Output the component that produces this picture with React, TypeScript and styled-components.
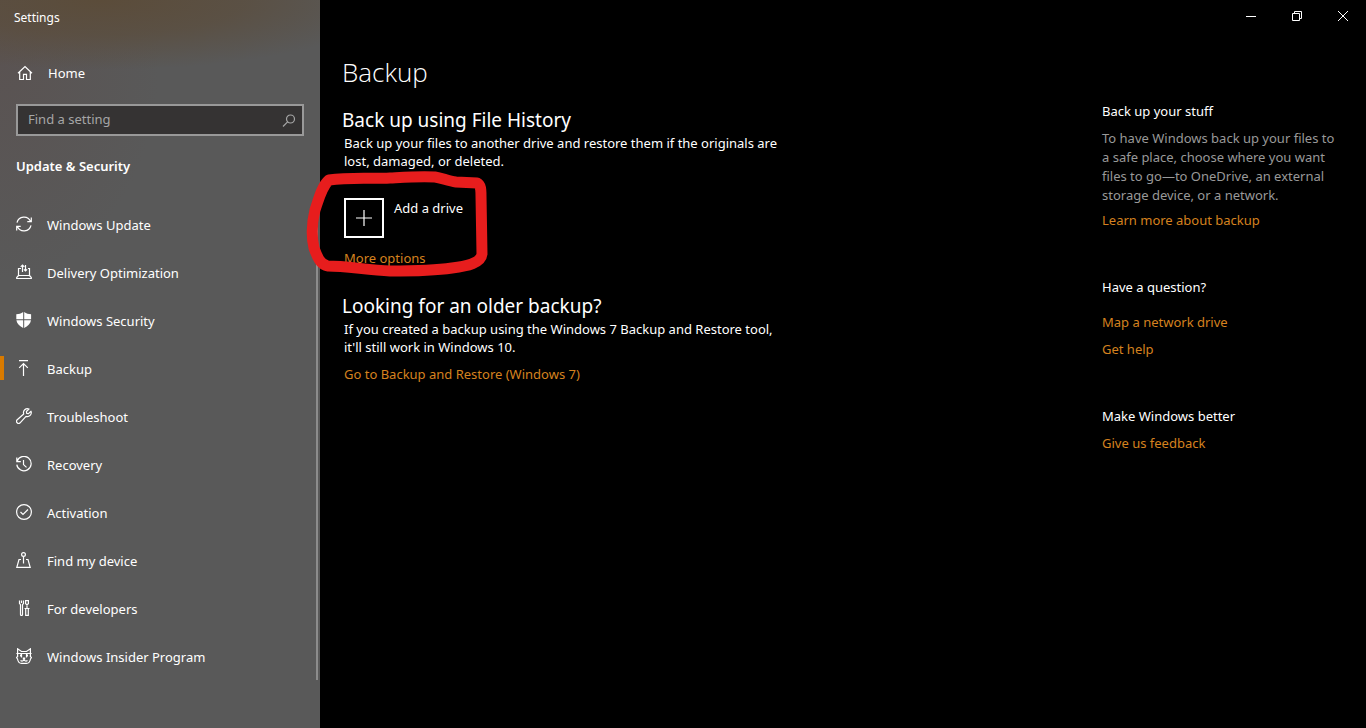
import React from "react";
import styled, { createGlobalStyle } from "styled-components";

const GlobalStyle = createGlobalStyle`
  * { box-sizing: border-box; }
  body {
    margin: 0;
    background: #000;
    color: #fff;
    font-family: "Noto Sans", "Open Sans", sans-serif;
    font-size: 13px;
    line-height: 18px;
  }
  h1, h2, h3, p, ul { margin: 0; padding: 0; font-size: inherit; font-weight: 400; }
  ul { list-style: none; }
  button { font: inherit; color: inherit; background: none; border: 0; padding: 0; }
`;

const Shell = styled.div`
  display: grid;
  grid-template-columns: 320px minmax(0, 1fr);
  min-height: 100vh;
`;

const Sidebar = styled.aside`
  display: flex;
  flex-direction: column;
  background:
    radial-gradient(ellipse 290px 70px at 100px 0, #5b4c3a 0%, #5b4c3aaa 50%, #5b4c3a00 100%),
    radial-gradient(ellipse 160px 220px at 0 60px, #5a5352 0%, #5a535200 100%),
    #595959;
`;

const AppName = styled.div`
  padding: 9px 14px;
  font-size: 12px;
`;

const HomeLink = styled.a`
  display: flex;
  align-items: center;
  gap: 15px;
  height: 40px;
  margin-top: 17px;
  padding-left: 17px;
  color: #fff;
  text-decoration: none;
`;

const SearchBox = styled.label`
  display: flex;
  align-items: center;
  height: 32px;
  margin: 11px 16px 0;
  padding: 0 5px 0 10px;
  border: 2px solid #999;
  background: #353333;
  color: #a6a6a6;
`;

const SearchInput = styled.input`
  flex: 1;
  min-width: 0;
  padding: 0 0 2px;
  border: 0;
  outline: 0;
  background: none;
  color: #fff;
  font: inherit;
  &::placeholder { color: #a6a6a6; opacity: 1; }
`;

const SectionName = styled.h2`
  padding: 21px 16px 0;
  && { font-weight: 600; }
`;

const NavScroll = styled.nav`
  flex: 1;
  display: flex;
  justify-content: space-between;
  margin-top: 26px;
  padding-right: 2px;
`;

const NavList = styled.ul`
  flex: 1;
`;

const ScrollThumb = styled.div`
  width: 2px;
  height: 479px;
  background: #8c8c8c;
`;

const NavLink = styled.a<{ $active?: boolean }>`
  display: flex;
  align-items: center;
  height: 48px;
  color: #fff;
  text-decoration: none;
  &::before {
    content: "";
    width: 4px;
    height: 24px;
    margin: 0 12px 2px 0;
    background: ${(p) => (p.$active ? "#d87a00" : "transparent")};
  }
  svg { margin: 0 15px 2px 0; }
`;

const Icon = styled.svg<{ $thin?: boolean }>`
  flex: none;
  width: 16px;
  height: 16px;
  fill: none;
  stroke: currentColor;
  stroke-width: ${(p) => (p.$thin ? 1 : 1.2)};
`;

const Main = styled.main`
  display: flex;
  flex-direction: column;
  min-width: 0;
`;

const WindowBar = styled.div`
  display: flex;
  justify-content: flex-end;
`;

const WindowButton = styled.button`
  display: grid;
  place-items: center;
  width: 46px;
  height: 32px;
`;

const Content = styled.div`
  display: flex;
  justify-content: space-between;
  gap: 32px;
  padding: 22px 24px 24px 22px;
`;

const Settings = styled.div`
  max-width: 448px;
`;

const PageTitle = styled.h1`
  font-family: "Open Sans", "Noto Sans", sans-serif;
  && { font-size: 26px; font-weight: 350; }
  line-height: 36px;
`;

const GroupTitle = styled.h2`
  && { font-size: 19px; }
  line-height: 24px;
`;

const GroupBody = styled.div`
  padding: 2px 2px 0;
`;

const Group = styled.section<{ $gap: number }>`
  margin-top: ${(p) => p.$gap}px;
`;

const Link = styled.a`
  color: #d5821f;
  text-decoration: none;
`;

const DriveArea = styled.div`
  position: relative;
  display: flex;
  flex-direction: column;
  align-items: flex-start;
  gap: 11px;
  margin-top: 28px;
`;

const AddDrive = styled.button`
  display: flex;
  align-items: flex-start;
  gap: 10px;
`;

const DriveLabel = styled.span`
  padding-top: 1px;
`;

const PlusTile = styled.span`
  display: grid;
  place-items: center;
  width: 40px;
  height: 40px;
  border: 2px solid #fff;
`;

const Marker = styled.svg`
  position: absolute;
  left: -44px;
  top: -38px;
  width: 200px;
  height: 125px;
  pointer-events: none;
`;

const SpacedLine = styled.p`
  margin-top: 9px;
`;

const Related = styled.aside`
  flex: none;
  width: 240px;
  padding-top: 48px;
`;

const RelatedGroup = styled.section`
  display: flex;
  flex-direction: column;
  align-items: flex-start;
  gap: 9px;
  & + & { margin-top: 49px; }
`;

const RelatedTitle = styled.h3<{ $roomy?: boolean }>`
  padding-bottom: ${(p) => (p.$roomy ? 8 : 0)}px;
`;

const HelpText = styled.p`
  color: #999;
  line-height: 19px;
  margin-bottom: -3px;
`;

const icons: Record<string, React.ReactNode> = {
  home: <path d="M1 8.2 8 1.5l7 6.7M2.7 7v7.5h3.8V9.3h3v5.2h3.8V7" />,
  update: (
    <path d="M1 6.6A7.2 7.2 0 0 1 14.6 5.4M15.3 1.6v4h-4M15 9.4A7.2 7.2 0 0 1 1.4 10.6M.7 14.4v-4h4" />
  ),
  delivery: (
    <path d="M5 4.5H2.500V11.500L.7 13.500v1h14.600v-1L13.500 11.500V4.500H12M2.500 11.500h11M6.500 8V1M4.700 2.800 6.500 1l1.800 1.800M9.500 1v6M7.900 5.400 9.500 7l1.600-1.600" />
  ),
  security: (
    <g fill="currentColor" stroke="none">
      <path d="M7.2 0v7.2H.3V2.200C3 2.200 5 1.500 7.200 0z" />
      <path d="M8.2 0v7.2h6.900V2.200C12.400 2.200 10.400 1.500 8.200 0z" />
      <path d="M.4 8.200h6.800V16C3.700 14.200.9 11.700.4 8.200z" />
      <path d="M15 8.200H8.200V16c3.500-1.800 6.300-4.300 6.800-7.800z" />
    </g>
  ),
  backup: <path d="M3 .6h9M7.5 16V3.500M3.200 7.800l4.300-4.300 4.300 4.300" />,
  troubleshoot: (
    <path
      strokeLinejoin="round"
      d="M13 1A4 4 0 0 0 7.700 6L1.200 11.800a2 2 0 0 0 2.900 3L10 8.400A4 4 0 0 0 15 3.200L12.500 5.600 10.700 5.300 10.400 3.500z"
    />
  ),
  recovery: <path d="M1.100 5.300A7.200 7.200 0 1 1 .8 8.600M.8 1.600v4h4M7.500 4v4.600l3 2.800" />,
  activation: (
    <>
      <circle cx="8" cy="8" r="7.4" />
      <path d="m4.500 8 2.500 2.500 5-5" />
    </>
  ),
  find: (
    <>
      <circle cx="7.5" cy="2.5" r="1.9" />
      <path d="M7.500 4.500V11.500M5 7.500H3L.8 15.400h13.400L12 7.500h-2" />
    </>
  ),
  developers: (
    <path d="M3.500.5v3l1 1.200v9.800a1 1 0 0 0 2 0V4.700l1-1.200v-3M5.500.5v2.500M9.600.6h2.800v3l-1.400 1.100L9.600 3.600zM11 4.700v3.800M8.500 8.500h5M9.700 8.500v6.900h2.600V8.500" />
  ),
  insider: (
    <>
      <path d="M1.600 9V.8l3.900 2.700h5l3.900-2.700V9M.4 5.500h15.200M1.600 8.500.5 9.500l1 1.500c.5 2.500 2 4.400 4 4.400h5c2 0 3.500-1.900 4-4.400l1-1.500-1.100-1" />
      <path d="M5.500 5.500v4M10.500 5.500v4M4.500 12.500c1.500 1 2.700.6 3.500-1 .8 1.600 2 2 3.500 1" />
      <path d="M4 7.500h2M10 7.500h2M6.800 10.500h2.400" strokeWidth="2" />
    </>
  ),
};

const navItems = [
  { icon: "update", label: "Windows Update" },
  { icon: "delivery", label: "Delivery Optimization" },
  { icon: "security", label: "Windows Security" },
  { icon: "backup", label: "Backup", active: true },
  { icon: "troubleshoot", label: "Troubleshoot" },
  { icon: "recovery", label: "Recovery" },
  { icon: "activation", label: "Activation" },
  { icon: "find", label: "Find my device" },
  { icon: "developers", label: "For developers" },
  { icon: "insider", label: "Windows Insider Program" },
];

const Glyph = ({ name }: { name: string }) => (
  <Icon viewBox="0 0 16 16" aria-hidden="true">
    {icons[name]}
  </Icon>
);

export default function App() {
  return (
    <>
      <GlobalStyle />
      <Shell>
        <Sidebar>
          <AppName>Settings</AppName>
          <HomeLink href="#home">
            <Glyph name="home" />
            Home
          </HomeLink>
          <SearchBox>
            <SearchInput type="text" placeholder="Find a setting" aria-label="Find a setting" />
            <Icon viewBox="0 0 16 16" aria-hidden="true">
              <circle cx="9.5" cy="7" r="4" />
              <path d="M6.600 9.900 2 14.500" />
            </Icon>
          </SearchBox>
          <SectionName>Update &amp; Security</SectionName>
          <NavScroll>
            <NavList>
              {navItems.map((item) => (
                <li key={item.label}>
                  <NavLink href="#" $active={item.active} aria-current={item.active ? "page" : undefined}>
                    <Glyph name={item.icon} />
                    {item.label}
                  </NavLink>
                </li>
              ))}
            </NavList>
            <ScrollThumb />
          </NavScroll>
        </Sidebar>
        <Main>
          <WindowBar>
            <WindowButton aria-label="Minimize">
              <Icon $thin viewBox="0 0 16 16"><path d="M3 8.500h10" /></Icon>
            </WindowButton>
            <WindowButton aria-label="Restore">
              <Icon $thin viewBox="0 0 16 16"><path d="M3.500 5.500h7v7h-7zM5.500 5.500v-2h7v7h-2" /></Icon>
            </WindowButton>
            <WindowButton aria-label="Close">
              <Icon $thin viewBox="0 0 16 16"><path d="m3 3 10 10M13 3 3 13" /></Icon>
            </WindowButton>
          </WindowBar>
          <Content>
            <Settings>
              <PageTitle>Backup</PageTitle>
              <Group $gap={18}>
                <GroupTitle>Back up using File History</GroupTitle>
                <GroupBody>
                  <p>
                    Back up your files to another drive and restore them if the originals are lost, damaged, or deleted.
                  </p>
                  <DriveArea>
                    <AddDrive>
                      <PlusTile>
                        <Icon viewBox="0 0 16 16"><path d="M8 0v16M0 8h16" /></Icon>
                      </PlusTile>
                      <DriveLabel>Add a drive</DriveLabel>
                    </AddDrive>
                    <Link href="#more">More options</Link>
                    <Marker viewBox="0 0 200 125" aria-hidden="true">
                      <path
                        d="M29 20C50 17 70 19 90 18C108 17 122 16 135 17C142 18 148 21 156 22L177 23C181 25 181 30 181 36L182 94C181 103 168 106 152 108C132 111 110 111 90 111C68 110 45 106 28 106C20 105 17 96 14 88C11 75 12 62 15 50C19 38 22 26 29 20Z"
                        fill="none"
                        stroke="#e71d1d"
                        strokeWidth="11"
                        strokeLinejoin="round"
                      />
                    </Marker>
                  </DriveArea>
                </GroupBody>
              </Group>
              <Group $gap={27}>
                <GroupTitle>Looking for an older backup?</GroupTitle>
                <GroupBody>
                  <p>
                    If you created a backup using the Windows 7 Backup and Restore tool, it'll still work in Windows 10.
                  </p>
                  <SpacedLine>
                    <Link href="#restore">Go to Backup and Restore (Windows 7)</Link>
                  </SpacedLine>
                </GroupBody>
              </Group>
            </Settings>
            <Related>
              <RelatedGroup>
                <RelatedTitle>Back up your stuff</RelatedTitle>
                <HelpText>
                  To have Windows back up your files to a safe place, choose where you want files to go—to OneDrive, an
                  external storage device, or a network.
                </HelpText>
                <Link href="#learn">Learn more about backup</Link>
              </RelatedGroup>
              <RelatedGroup>
                <RelatedTitle $roomy>Have a question?</RelatedTitle>
                <Link href="#map">Map a network drive</Link>
                <Link href="#help">Get help</Link>
              </RelatedGroup>
              <RelatedGroup>
                <RelatedTitle>Make Windows better</RelatedTitle>
                <Link href="#feedback">Give us feedback</Link>
              </RelatedGroup>
            </Related>
          </Content>
        </Main>
      </Shell>
    </>
  );
}
